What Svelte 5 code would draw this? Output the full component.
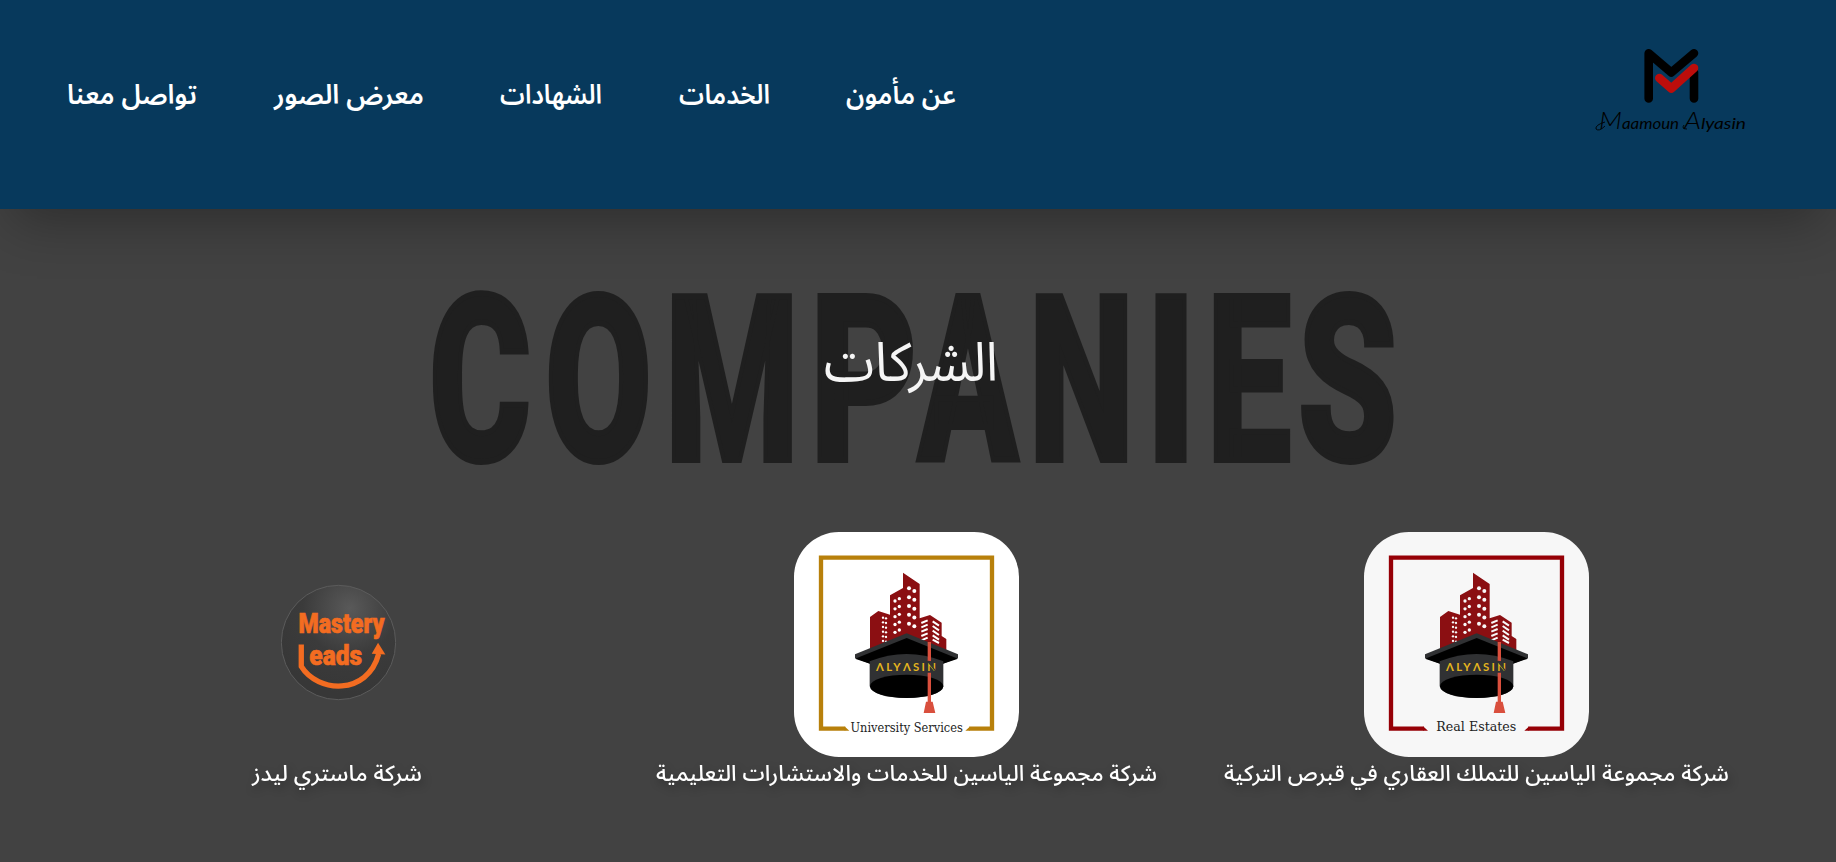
<script>
  const nav = [
    { label: 'عن مأمون', w: 110 },
    { label: 'الخدمات', w: 91 },
    { label: 'الشهادات', w: 102 },
    { label: 'معرض الصور', w: 150 },
    { label: 'تواصل معنا', w: 130 }
  ];
  const word = [
    ['C', 429, 102], ['O', 545, 107], ['M', 665, 134], ['P', 810, 107], ['A', 918, 100],
    ['N', 1029, 105], ['I', 1146, 50], ['E', 1207, 84], ['S', 1298, 99]
  ];
  const companies = [
    { name: 'شركة مجموعة الياسين للتملك العقاري في قبرص التركية', w: 505, kind: 'cap', bg: '#f7f7f7', frame: '#960006', label: 'Real Estates', lx: 379, ly: 632, lw: 240, gapL: 234, gapR: 523 },
    { name: 'شركة مجموعة الياسين للخدمات والاستشارات التعليمية', w: 501, kind: 'cap', bg: '#ffffff', frame: '#b8800b', label: 'University Services', lx: 380, ly: 635, lw: 337, gapL: 208, gapR: 556 },
    { name: 'شركة ماستري ليدز', w: 170, kind: 'leads' }
  ];
  const windows = [];
  for (let i = 0; i < 5; i++) {
    windows.push([387, 205 + i * 26.5, 6], [403, 213 + i * 26.5, 6]);
    windows.push([345, 243 + i * 23.5, 5], [358, 236 + i * 23.5, 5]);
  }
  for (let i = 0; i < 6; i++) windows.push([309, 293 + i * 14, 3.5], [318, 295 + i * 14, 3.5]);
</script>

<div class="page" dir="rtl">
  <header>
    <svg class="brand" viewBox="0 0 190 120">
      <g fill="none" stroke="#000" stroke-width="8.6" stroke-linecap="round" stroke-linejoin="round">
        <path d="M68.7 68.5V23.2L91.3 42.5 114 23.2M114 68.5V42" />
        <path d="M79.3 48L91.3 58.5 114 38" stroke="#bc0d0b" />
      </g>
      <text y="99" class="sign"><tspan class="big" x="19" textLength="23" lengthAdjust="spacingAndGlyphs">M</tspan><tspan x="42" textLength="57" lengthAdjust="spacingAndGlyphs">aamoun</tspan><tspan class="big" x="104" textLength="17" lengthAdjust="spacingAndGlyphs">A</tspan><tspan x="121" textLength="45" lengthAdjust="spacingAndGlyphs">lyasin</tspan></text>
      <path d="M25 92Q15 95 16 99 19 102 25 96M104 95Q101 99 107 99" fill="none" stroke="#000" stroke-width=".9" />
    </svg>
    <nav>
      {#each nav as n}
        <a href="#top" style="width:{n.w}px">
          <svg height="50" width={n.w}><text x={n.w / 2} y="37" textLength={n.w} lengthAdjust="spacingAndGlyphs">{n.label}</text></svg>
        </a>
      {/each}
    </nav>
  </header>

  <main>
    <div class="title">
      <svg class="word" viewBox="400 260 1020 230" direction="ltr">
        <text y="460">{#each word as [c, x, w]}<tspan {x} textLength={w} lengthAdjust="spacingAndGlyphs">{c}</tspan>{/each}</text>
      </svg>
      <h2><svg width="174" height="90"><text x="87" y="51" textLength="174" lengthAdjust="spacingAndGlyphs">الشركات</text></svg></h2>
    </div>

    <section>
      {#each companies as c}
        <article>
          {#if c.kind === 'cap'}
            <svg class="logo" viewBox="42 36 675 675" direction="ltr" style="background:{c.bg}">
              <path d="M{c.gapL - 12} 626H123V113H636V626H{c.gapR + 12}" fill="none" stroke={c.frame} stroke-width="13" />
              <path d="M{c.gapL - 14} 619.5L{c.gapL} 632.5H{c.gapL - 14}zM{c.gapR + 14} 619.5L{c.gapR} 632.5H{c.gapR + 14}z" fill={c.frame} />
              <path d="M270 400V291L295 273 330 284V226L369 204V158L419 192V295L450 285 485 308V348L499 357V400z" fill="#8b0f12" />
              {#each windows as [x, y, r]}<circle cx={x} cy={y} {r} fill={c.bg} />{/each}
              <path d="M424 309l19-8M424 322l19-8M424 335l19-8M424 348l19-8M424 361l19-8M458 304l19 13M458 318l19 13M458 332l19 13M458 346l19 13M458 359l19 10" stroke={c.bg} stroke-width="6" />
              <path d="M225 403L380 340 534 403V414L489 431H270L225 414z" fill="#303133" />
              <path d="M225 416L380 354 534 416 489 431H270z" fill="#000" />
              <path d="M269 424Q380 380 490 424V498Q480 533 380 534 280 533 269 498z" fill="#303133" />
              <ellipse cx="380" cy="499" rx="110" ry="35" fill="#000" />
              <path d="M443 366H453V423H443zM443 458H453V545H458L466 579H431L438 545H443z" fill="#d94f3d" />
              <text x="288" y="452" class="yasin" textLength="180">ΛLYΛSIN</text>
              <path d="M443 423L468 455" stroke="#303133" stroke-width="4" />
              <text x={c.lx} y={c.ly} class="kind" textLength={c.lw} lengthAdjust="spacingAndGlyphs">{c.label}</text>
            </svg>
          {:else}
            <svg class="leads" viewBox="125 71 346 352" direction="ltr">
              <defs><radialGradient id="ball" cx=".6" cy=".2" r=".75"><stop offset="0" stop-color="#595959" /><stop offset=".55" stop-color="#3b3b3b" /><stop offset="1" stop-color="#373737" /></radialGradient></defs>
              <circle cx="298" cy="247" r="172" fill="url(#ball)" stroke="#5b5b5b" stroke-width="3" />
              <g class="impact">
                <text x="178" y="219" textLength="258" lengthAdjust="spacingAndGlyphs">Mastery</text>
                <text x="210" y="316" textLength="159" lengthAdjust="spacingAndGlyphs">eads</text>
              </g>
              <path d="M186 253V319C235 399 385 408 419 281" fill="none" stroke="#f36c21" stroke-width="16" />
              <path d="M417 248L439 283 398 281z" fill="#f36c21" />
            </svg>
          {/if}
          <h3><svg width={c.w} height="40"><text x={c.w / 2} y="24" textLength={c.w} lengthAdjust="spacingAndGlyphs">{c.name}</text></svg></h3>
        </article>
      {/each}
    </section>
  </main>
</div>

<style>
  :global(body) { background: #424242; overflow: hidden; }
  .page { height: 862px; overflow: hidden; font-family: "Noto Sans Arabic", "Noto Sans", "DejaVu Sans", sans-serif; color: #fff; }
  svg { display: block; }
  header { height: 209px; box-sizing: border-box; background: #07395c; display: flex; justify-content: space-between; padding: 30px 66px 0 67px; box-shadow: 0 25px 50px -12px rgba(0, 0, 0, .3); position: relative; }
  .brand { width: 190px; height: 120px; }
  .sign { font: italic 400 15px Lato, sans-serif; direction: ltr; fill: #000; }
  .big { font-size: 23px; font-weight: 300; }
  nav { display: flex; gap: 76.5px; padding-top: 37px; }
  nav svg, h2 svg, h3 svg, .word { overflow: visible; }
  nav text { font-size: 27px; font-weight: 600; fill: #fff; text-anchor: middle; }
  .title { display: grid; grid-template-columns: 100%; place-items: center; padding-top: 51px; height: 230px; }
  .title > * { grid-area: 1 / 1; }
  .word { width: 1020px; height: 230px; margin-right: 16px; direction: ltr; }
  .word text { font: 800 231px Roboto, sans-serif; fill: #1f1f1f; stroke: #1f1f1f; stroke-width: 6; }
  h2 { margin: 0 14px 0 0; font-weight: 400; }
  h2 text { font-size: 54px; fill: #f5f5f5; text-anchor: middle; }
  section { display: grid; grid-template-columns: 569px 571px 568px; justify-content: start; padding: 42px 75px 0 0; }
  article { display: flex; flex-direction: column; align-items: center; height: 270px; }
  .logo { width: 225px; height: 225px; border-radius: 45px; direction: ltr; }
  .leads { width: 115px; height: 117px; margin: 52px 0 56px 0; padding-left: 3px; direction: ltr; }
  h3 { margin: 0; font-weight: 500; }
  h3 text { font-size: 22px; fill: #fff; text-anchor: middle; }
  h3 svg { filter: drop-shadow(2px 4px 4px rgba(0, 0, 0, .3)); }
  .yasin { font: 700 34px Lato, sans-serif; fill: #e4b51e; }
  .kind { font: 36px "DejaVu Serif", serif; fill: #222; text-anchor: middle; }
  .impact { font: 900 83px Roboto, sans-serif; fill: #f36c21; stroke: #f36c21; stroke-width: 2; }
</style>
